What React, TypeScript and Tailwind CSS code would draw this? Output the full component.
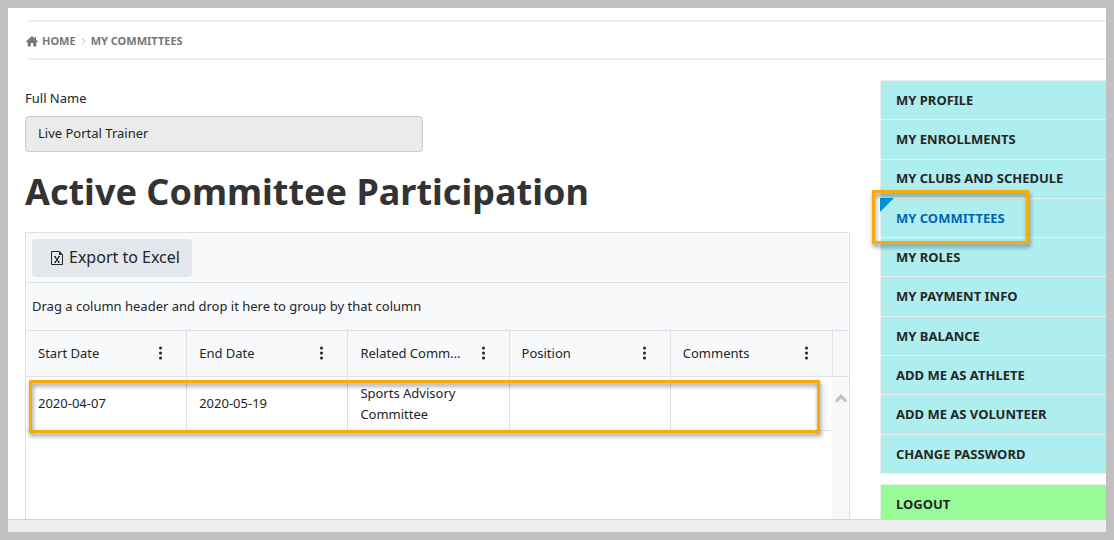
import { useState } from 'react';

interface Column {
  key: string;
  label: string;
}

type Row = Record<string, string>;

const columns: Column[] = [
  { key: 'startDate', label: 'Start Date' },
  { key: 'endDate', label: 'End Date' },
  { key: 'committee', label: 'Related Comm…' },
  { key: 'position', label: 'Position' },
  { key: 'comments', label: 'Comments' },
];

const rows: Row[] = [
  {
    startDate: '2020-04-07',
    endDate: '2020-05-19',
    committee: 'Sports Advisory Committee',
    position: '',
    comments: '',
  },
];

const menuItems = [
  'My Profile',
  'My Enrollments',
  'My Clubs and Schedule',
  'My Committees',
  'My Roles',
  'My Payment Info',
  'My Balance',
  'Add Me as Athlete',
  'Add Me as Volunteer',
  'Change Password',
];

function HomeIcon() {
  return (
    <svg className="w-3 h-[11px]" viewBox="0 0 12 11" fill="currentColor" aria-hidden="true">
      <path d="M6 0L8.6 2.4V1H10V3.7L12 5.6L11.2 6.3H10.3V10.5H7.2V7H4.8V10.5H1.7V6.3H0.8L0 5.6Z" />
    </svg>
  );
}

function ExcelIcon() {
  return (
    <svg className="w-3 h-[14px]" viewBox="0 0 12 14" fill="none" stroke="currentColor" aria-hidden="true">
      <path d="M0.5 0.5H8.5L11.5 3.5V13.5H0.5Z" />
      <path d="M8 0.5V4H11.5Z" fill="currentColor" stroke="none" />
      <path d="M3.8 5.5L8 11.5M8.2 5.5L4 11.5" strokeWidth="1.3" />
      <path d="M3 5.5H5M7 5.5H9M3 11.5H5M7 11.5H9" strokeWidth="0.8" />
    </svg>
  );
}

function Breadcrumb() {
  return (
    <nav
      aria-label="Breadcrumb"
      className="flex items-center h-10 pt-0.5 border-y-2 border-[#efefef] rounded-l-sm text-[11px] font-bold text-[#777777] uppercase"
    >
      <a href="#home" className="flex items-center gap-1 pl-px">
        <HomeIcon />
        Home
      </a>
      <svg className="w-[5px] h-[7px] ml-[5px] mr-[5px] text-[#d8d8d8]" viewBox="0 0 5 7" fill="none" stroke="currentColor" strokeWidth="1.4" aria-hidden="true">
        <path d="M1 0.5L4 3.5L1 6.5" />
      </svg>
      <a href="#committees">My Committees</a>
    </nav>
  );
}

function CommitteeGrid() {
  return (
    <section className="flex flex-col flex-1 mt-4 border border-b-0 border-[#dee2e6]">
      <div className="p-1.5 pb-[5px] bg-[#f8f9fb] border-b border-[#dee2e6]">
        <button
          type="button"
          className="flex items-center gap-1.5 h-[38px] pl-[19px] pr-3 rounded bg-[#e4e7eb] text-base text-[#212529]"
        >
          <ExcelIcon />
          <span className="pb-0.5">Export to Excel</span>
        </button>
      </div>
      <div className="flex items-center h-12 px-1.5 bg-[#f8f9fb] border-b border-[#dee2e6]">
        Drag a column header and drop it here to group by that column
      </div>

      <div className="flex flex-1">
        <div className="relative flex-1">
          <table className="w-full table-fixed border-separate border-spacing-0">
            <thead>
              <tr className="bg-[#f8f9fb]">
                {columns.map((col) => (
                  <th
                    key={col.key}
                    className="h-[46px] p-0 border-r border-b border-[#dee2e6] last:border-r-0 font-normal text-left"
                  >
                    <div className="flex items-center justify-between pl-3 pr-4">
                      <span className="truncate">{col.label}</span>
                      <button type="button" aria-label={`${col.label} column menu`} className="shrink-0 w-5 pb-0.5">
                        <svg className="w-5 h-[14px]" viewBox="0 0 20 14" fill="currentColor" aria-hidden="true">
                          <circle cx="10.5" cy="2" r="1.5" />
                          <circle cx="10.5" cy="7" r="1.5" />
                          <circle cx="10.5" cy="12" r="1.5" />
                        </svg>
                      </button>
                    </div>
                  </th>
                ))}
              </tr>
            </thead>
            <tbody>
              {rows.map((row) => (
                <tr key={row.startDate}>
                  {columns.map((col) => (
                    <td
                      key={col.key}
                      className="h-[54px] px-3 py-0 border-r border-b border-[#dee2e6] last:border-r-0 leading-[21px]"
                    >
                      {row[col.key]}
                    </td>
                  ))}
                </tr>
              ))}
            </tbody>
          </table>
          {/* Callout around the first row */}
          <div className="absolute top-[49px] left-[3px] right-3 h-[53px] border-3 border-[#faab0c] drop-shadow-[1px_3px_2px_rgba(0,0,0,0.45)] pointer-events-none" />
        </div>

        {/* Scroll track */}
        <div className="flex flex-col w-[17px]">
          <div className="h-[46px] bg-[#f8f9fb] border-l border-b border-[#dee2e6]" />
          <div className="flex-1 flex justify-center items-start pt-4 bg-[#f8f8f8]">
            <svg className="w-3 h-[10px] text-[#c1c1c1]" viewBox="0 0 12 10" fill="none" stroke="currentColor" strokeWidth="3" aria-hidden="true">
              <path d="M1 8.5L6 3.2L11 8.5" />
            </svg>
          </div>
        </div>
      </div>
    </section>
  );
}

interface SideMenuProps {
  active: string;
  onSelect: (item: string) => void;
}

function SideMenu({ active, onSelect }: SideMenuProps) {
  return (
    <aside className="w-[226px] shrink-0 font-bold uppercase text-[#262626]">
      <ul className="grid grid-rows-10 h-[394px] border-t border-l border-[#eeeeee]">
        {menuItems.map((item) => (
          <li key={item} className="relative flex bg-[#afeeee] border-b border-[#eeeeee]">
            <a
              href="#menu"
              onClick={() => onSelect(item)}
              className={`flex items-center flex-1 pl-[15px] pt-px ${item === active ? 'text-[#0066b3]' : ''}`}
            >
              {item}
            </a>
            {item === active && (
              <>
                <svg className="absolute -top-px -left-px w-[14px] h-[14px]" viewBox="0 0 14 14" aria-hidden="true">
                  <path d="M0 0H14L0 14Z" fill="#0090d9" />
                </svg>
                <div className="absolute -top-[9px] -left-[9px] w-[157px] h-[54px] border-3 border-[#faab0c] drop-shadow-[1px_3px_2px_rgba(0,0,0,0.45)] z-10 pointer-events-none" />
              </>
            )}
          </li>
        ))}
      </ul>
      <a
        href="#logout"
        className="flex items-center h-10 mt-[10px] pl-[15px] border-t border-l border-[#eeeeee] bg-[#98fb98]"
      >
        Logout
      </a>
    </aside>
  );
}

export default function App() {
  const [active, setActive] = useState('My Committees');

  return (
    <div className="flex flex-col h-screen border-8 border-[#c0c0c0] bg-white font-['Noto_Sans',sans-serif] text-[13px] text-[#212529]">
      <div className="flex flex-col flex-1 min-h-0 overflow-hidden pl-[17px] pt-3">
        <Breadcrumb />
        <div className="flex flex-1 min-h-0 gap-[30px] pt-5">
          <main className="flex flex-col flex-1 min-w-0">
            <label htmlFor="full-name" className="pt-2 leading-5">
              Full Name
            </label>
            <input
              id="full-name"
              type="text"
              readOnly
              defaultValue="Live Portal Trainer"
              className="w-[398px] h-9 mt-2 px-3 pb-0.5 rounded border border-[#cccccc] bg-[#ebebeb]"
            />
            <h1 className="mt-4 text-4xl leading-12 font-bold text-[#333333]">
              Active Committee Participation
            </h1>
            <CommitteeGrid />
          </main>
          <SideMenu active={active} onSelect={setActive} />
        </div>
      </div>
      <div className="h-[13px] shrink-0 border-t border-[#d5d5d5] bg-[#efefef]" />
    </div>
  );
}
